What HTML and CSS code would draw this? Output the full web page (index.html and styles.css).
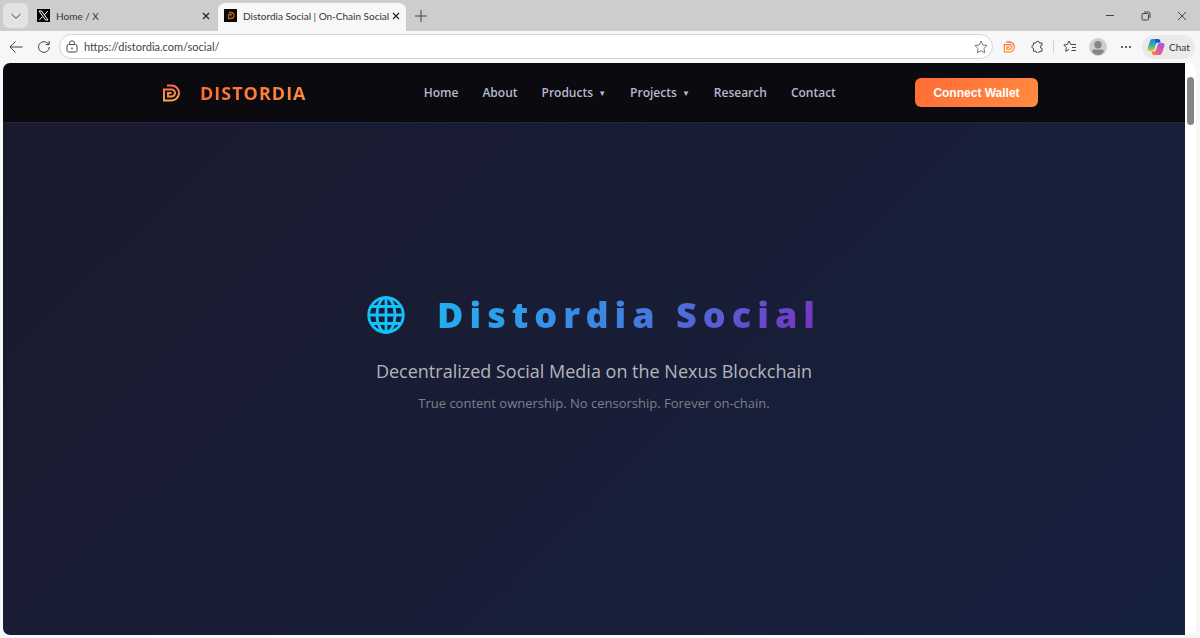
FILE: index.html
```html
<!DOCTYPE html>
<html lang="en">
<head>
    <meta charset="UTF-8">
    <meta name="viewport" content="width=device-width, initial-scale=1.0">
    <title>Distordia Social | On-Chain Social</title>
    <link rel="stylesheet" href="styles.css">
</head>
<body>
    <!-- Shared logo -->
    <svg class="defs" width="0" height="0" aria-hidden="true">
        <defs>
            <linearGradient id="logoFill" x1="0" y1="0" x2="0" y2="1">
                <stop offset="0" stop-color="#ff6b4a"/>
                <stop offset="1" stop-color="#f5a742"/>
            </linearGradient>
            <symbol id="logo" viewBox="0 0 18 18">
                <path d="M5 1.500h4.500a7.500 7.500 0 0 1 0 15H2V5.500h7.500a3.500 3.500 0 0 1 0 7H6V9h3.500" fill="none" stroke="url(#logoFill)" stroke-width="2"/>
            </symbol>
        </defs>
    </svg>

    <!-- Tabs -->
    <div class="tab-bar">
        <button class="tab-menu" aria-label="Tab actions">
            <svg width="12" height="12" viewBox="0 0 12 12"><path d="M1.500 4L6 8.300 10.500 4"/></svg>
        </button>
        <div class="tab">
            <svg class="favicon" width="13" height="13" viewBox="0 0 13 13">
                <rect width="13" height="13" fill="#000"/>
                <path d="M2 2h2.500l6.500 9H8.500z" fill="none" stroke="#fff" stroke-width="1"/>
                <path d="M10.800 2L7.300 6M5.600 7.500L2.300 11" stroke="#fff" stroke-width="1"/>
            </svg>
            <span class="tab-title">Home / X</span>
            <button class="tab-close" aria-label="Close Home / X">
                <svg width="8" height="8" viewBox="0 0 8 8"><path d="M1 1l6 6M7 1L1 7"/></svg>
            </button>
        </div>
        <div class="tab active">
            <svg class="favicon" width="13" height="13" viewBox="0 0 13 13">
                <rect width="13" height="13" fill="#0a0604"/>
                <path d="M5 3.500h2a2.700 2.700 0 0 1 0 6H4.500V5.500H7v2" fill="none" stroke="#b5602b" stroke-width="1.300"/>
            </svg>
            <span class="tab-title">Distordia Social | On-Chain Social</span>
            <button class="tab-close" aria-label="Close Distordia Social">
                <svg width="8" height="8" viewBox="0 0 8 8"><path d="M1 1l6 6M7 1L1 7"/></svg>
            </button>
        </div>
        <button class="new-tab" aria-label="New tab">
            <svg width="12" height="12" viewBox="0 0 12 12"><path d="M6 0v12M0 6h12"/></svg>
        </button>
        <div class="window-controls">
            <button aria-label="Minimize"><svg width="10" height="10" viewBox="0 0 10 10"><path d="M1 4.500h8"/></svg></button>
            <button aria-label="Restore"><svg width="10" height="10" viewBox="0 0 10 10"><rect x="1" y="2.500" width="6.500" height="6.500" rx="1"/><path d="M3 1h4.500A1.500 1.500 0 0 1 9 2.500V7"/></svg></button>
            <button aria-label="Close"><svg width="10" height="10" viewBox="0 0 10 10"><path d="M1 1l8 8M9 1L1 9"/></svg></button>
        </div>
    </div>

    <!-- Toolbar -->
    <div class="toolbar">
        <button aria-label="Back">
            <svg width="14" height="14" viewBox="0 0 14 14"><path d="M13.500 7H1M6.500 1.500L1 7l5.500 5.500"/></svg>
        </button>
        <button aria-label="Refresh">
            <svg width="14" height="14" viewBox="0 0 14 14"><path d="M12.300 7A5.400 5.400 0 1 1 10.500 3L12 4.300M12.200 1v3.500H8.700"/></svg>
        </button>
        <div class="address">
            <svg width="12" height="13" viewBox="0 0 12 13"><rect x="1" y="4.500" width="10" height="7.500" rx="1.500"/><path d="M3.500 4.500V3.300a2.500 2.500 0 0 1 5 0v1.200"/><circle cx="6" cy="8.300" r=".5"/></svg>
            <input type="text" value="https://distordia.com/social/" aria-label="Address">
            <svg class="star" width="14" height="14" viewBox="0 0 14 14"><path d="M7 1l1.800 4 4.300.5-3.200 3 .9 4.300L7 10.700l-3.800 2.100.9-4.300-3.200-3L5.200 5z"/></svg>
        </div>
        <button aria-label="Distordia wallet">
            <svg class="filled" width="12" height="12"><use href="#logo"/></svg>
        </button>
        <button aria-label="Extensions">
            <svg width="13" height="13" viewBox="0 0 13 13"><path d="M2.500 3H5a1.700 1.700 0 0 1 3.400 0H11V5.200a1.600 1.600 0 0 0 0 3.200V11.300H8.400a1.700 1.700 0 0 1-3.400 0H2.500V8.400a1.600 1.600 0 1 1 0-3.200z"/></svg>
        </button>
        <span class="divider"></span>
        <button aria-label="Favorites">
            <svg width="14" height="13" viewBox="0 0 14 13"><path d="M7.700 4.500L6 1 4.300 4.500.8 5l2.500 2.500-.6 3.800L6 9.500M7.700 4.500H13M9 7.500h4M8.500 10.500H13"/></svg>
        </button>
        <button aria-label="Profile">
            <svg class="filled" width="18" height="18" viewBox="0 0 18 18"><circle cx="9" cy="9" r="9" fill="#cfcfcf"/><circle cx="9" cy="6.700" r="3.700" fill="#858585"/><path d="M3 13.500q0-2 2-2h8q2 0 2 2-2.500 3.500-6 3.500t-6-3.500z" fill="#858585"/></svg>
        </button>
        <button aria-label="More">
            <svg class="filled" width="12" height="4" viewBox="0 0 12 4"><g fill="#333"><circle cx="2" cy="2" r="1"/><circle cx="6" cy="2" r="1"/><circle cx="10" cy="2" r="1"/></g></svg>
        </button>
        <button class="chat">
            <svg class="filled" width="18" height="18" viewBox="0 0 18 18">
                <defs>
                    <linearGradient id="cool" x1="0" y1="0" x2="0" y2="1">
                        <stop offset="0" stop-color="#1b85e8"/>
                        <stop offset=".5" stop-color="#2bb3a3"/>
                        <stop offset="1" stop-color="#f2c51d"/>
                    </linearGradient>
                    <linearGradient id="warm" x1="1" y1="0" x2="0" y2="1">
                        <stop offset="0" stop-color="#8f5df5"/>
                        <stop offset=".5" stop-color="#e0569f"/>
                        <stop offset="1" stop-color="#f98245"/>
                    </linearGradient>
                </defs>
                <path d="M5.500 1H11q1.500 0 2 1.500L13.500 4.500H11Q9.500 4.500 9 6L7.500 11Q7 13 5 13H2.500Q0 13 .6 10L3 3q.6-2 2.500-2z" fill="url(#cool)"/>
                <path d="M12.500 17H7q-1.500 0-2-1.500L4.500 13.500H7q1.500 0 2-1.500l1.500-5Q11 5 13 5h2.500q2.500 0 1.900 3L15 15q-.6 2-2.500 2z" fill="url(#warm)"/>
                <path d="M8.500 1H11q1.500 0 2 1.500l.5 2H11Q9 4.500 8.700 5.500z" fill="#1b50c8"/>
            </svg>
            Chat
        </button>
    </div>

    <!-- Page -->
    <div class="viewport">
        <div class="page">
            <header class="navbar">
                <div class="nav-container">
                    <a class="brand" href="#">
                        <svg width="18" height="18"><use href="#logo"/></svg>
                        <span>DISTORDIA</span>
                    </a>
                    <nav class="nav-menu">
                        <a href="#">Home</a>
                        <a href="#">About</a>
                        <a href="#">Products <span class="arrow">▼</span></a>
                        <a href="#">Projects <span class="arrow">▼</span></a>
                        <a href="#">Research</a>
                        <a href="#">Contact</a>
                    </nav>
                    <button class="wallet-btn">Connect Wallet</button>
                </div>
            </header>
            <main class="hero">
                <h1>
                    <svg width="38" height="38" viewBox="0 0 38 38" aria-hidden="true">
                        <g fill="none" stroke="#12c2fa" stroke-width="2.800">
                            <circle cx="19" cy="19" r="17.300"/>
                            <ellipse cx="19" cy="19" rx="9" ry="17.300"/>
                            <path d="M19 2v34M2 19h34M4.500 10.500h29M4.500 27.500h29"/>
                        </g>
                    </svg>
                    <span>Distordia Social</span>
                </h1>
                <p class="subtitle">Decentralized Social Media on the Nexus Blockchain</p>
                <p class="tagline">True content ownership. No censorship. Forever on-chain.</p>
            </main>
        </div>
        <div class="scrollbar"><div class="thumb"></div></div>
    </div>
</body>
</html>
```

FILE: styles.css
```css
* {
    box-sizing: border-box;
}
body {
    margin: 0;
    height: 100vh;
    display: flex;
    flex-direction: column;
    background: #f7f7f7;
    font-family: "Open Sans", "Noto Sans", sans-serif;
    color: #333;
    overflow: hidden;
}
button {
    border: none;
    background: none;
    padding: 0;
    color: inherit;
    font-family: inherit;
    display: flex;
    align-items: center;
    justify-content: center;
}
.defs {
    position: absolute;
}

/* Tabs */
.tab-bar,
.toolbar {
    font-family: Lato, "Open Sans", sans-serif;
}
.tab-bar svg,
.toolbar svg {
    flex-shrink: 0;
    fill: none;
    stroke: #444;
    stroke-width: 1;
}
.tab-bar svg.favicon,
.toolbar svg.filled {
    stroke: none;
}
.toolbar svg.star {
    stroke: #777;
}
.tab-bar {
    height: 31px;
    padding-left: 3px;
    display: flex;
    align-items: flex-end;
    background: #cdcdcd;
}
.tab-menu {
    width: 25px;
    height: 25px;
    margin-bottom: 3px;
    border-radius: 6px;
    background: #e3e3e3;
}
.tab {
    width: 190px;
    height: 28px;
    padding: 0 8px 3px 9px;
    display: flex;
    align-items: center;
    gap: 3px;
    font-size: 10px;
}
.tab.active {
    width: 188px;
    padding: 0 7px 3px 6px;
    border-radius: 7px 7px 0 0;
    background: #f7f7f7;
}
.favicon {
    margin-right: 3px;
}
.tab-title {
    flex: 1;
    white-space: nowrap;
}
.tab-bar .tab-close svg {
    stroke: #222;
    stroke-width: 1.2;
}
.new-tab {
    width: 30px;
    height: 31px;
}
.window-controls {
    display: flex;
    margin-left: auto;
}
.window-controls button {
    width: 36px;
    height: 31px;
}

/* Toolbar */
.toolbar {
    height: 32px;
    padding: 0 5px 1px 2px;
    display: flex;
    align-items: center;
}
.toolbar button {
    width: 28px;
    height: 24px;
}
.address {
    flex: 1;
    height: 25px;
    padding: 0 4px 0 6px;
    margin: 0 2px 0 1px;
    display: flex;
    align-items: center;
    gap: 6px;
    background: #fff;
    border: 1px solid #d4d4d4;
    border-radius: 13px;
}
.address input {
    flex: 1;
    border: none;
    padding: 0;
    background: none;
    color: #444;
    font-family: inherit;
    font-size: 11px;
}
.divider {
    width: 1px;
    height: 13px;
    margin: 0 2px;
    background: #d4d4d4;
}
.toolbar .chat {
    width: 53px;
    gap: 4px;
    margin-left: 2px;
    border-radius: 12px;
    background: #eaeaea;
    font-size: 10px;
}

/* Page */
.viewport {
    flex: 1;
    min-height: 0;
    margin: 0 4px 3px 3px;
    display: flex;
    background: #fff;
    border-radius: 7px;
    overflow: hidden;
}
.page {
    flex: 1;
    display: flex;
    flex-direction: column;
}
.scrollbar {
    width: 11px;
    padding: 14px 2px;
}
.thumb {
    height: 48px;
    border-radius: 4px;
    background: #858585;
}
.navbar {
    height: 60px;
    background: #0a0a0f;
    border-bottom: 1px solid #24243a;
}
.nav-container {
    max-width: 888px;
    height: 100%;
    margin: 0 auto;
    display: flex;
    align-items: center;
}
.brand {
    display: flex;
    align-items: center;
    gap: 20px;
    padding-left: 12px;
    text-decoration: none;
    font-size: 18px;
    font-weight: 700;
    letter-spacing: 1px;
}
.brand span {
    background: linear-gradient(135deg, #ff6b35, #ff8c42);
    background-clip: text;
    color: transparent;
}
.nav-menu {
    flex: 1;
    display: flex;
    justify-content: center;
    gap: 24px;
    padding-left: 38px;
}
.nav-menu a {
    color: #b8b8cc;
    text-decoration: none;
    font-size: 12px;
    line-height: 18px;
    font-weight: 600;
    white-space: nowrap;
}
.arrow {
    padding-left: 2px;
    font-size: 8px;
    vertical-align: 1px;
}
.wallet-btn {
    width: 123px;
    height: 29px;
    border-radius: 6px;
    background: linear-gradient(135deg, #ff6b35, #ff8c42);
    color: #fff;
    font-family: "Liberation Sans", Arial, sans-serif;
    font-size: 12px;
    font-weight: 700;
}
.hero {
    flex: 1;
    display: flex;
    flex-direction: column;
    align-items: center;
    justify-content: center;
    padding-bottom: 56px;
    background: linear-gradient(135deg, #1a1a2e, #16213e);
    text-align: center;
}
.hero h1 {
    display: flex;
    align-items: center;
    gap: 32px;
    margin: 0 0 16px;
    font-family: "Noto Sans", "Open Sans", sans-serif;
    font-size: 36px;
    line-height: 52px;
    font-weight: 900;
    letter-spacing: 6px;
}
.hero h1 span {
    background: linear-gradient(135deg, #1fb4f2, #4080e0 50%, #7b2cbf);
    background-clip: text;
    color: transparent;
}
.hero p {
    margin: 0;
}
.hero .subtitle {
    margin-bottom: 8px;
    color: #b4b5bb;
    font-size: 18px;
    line-height: 28px;
}
.hero .tagline {
    color: #7d808c;
    font-size: 13px;
    line-height: 20px;
}
```
